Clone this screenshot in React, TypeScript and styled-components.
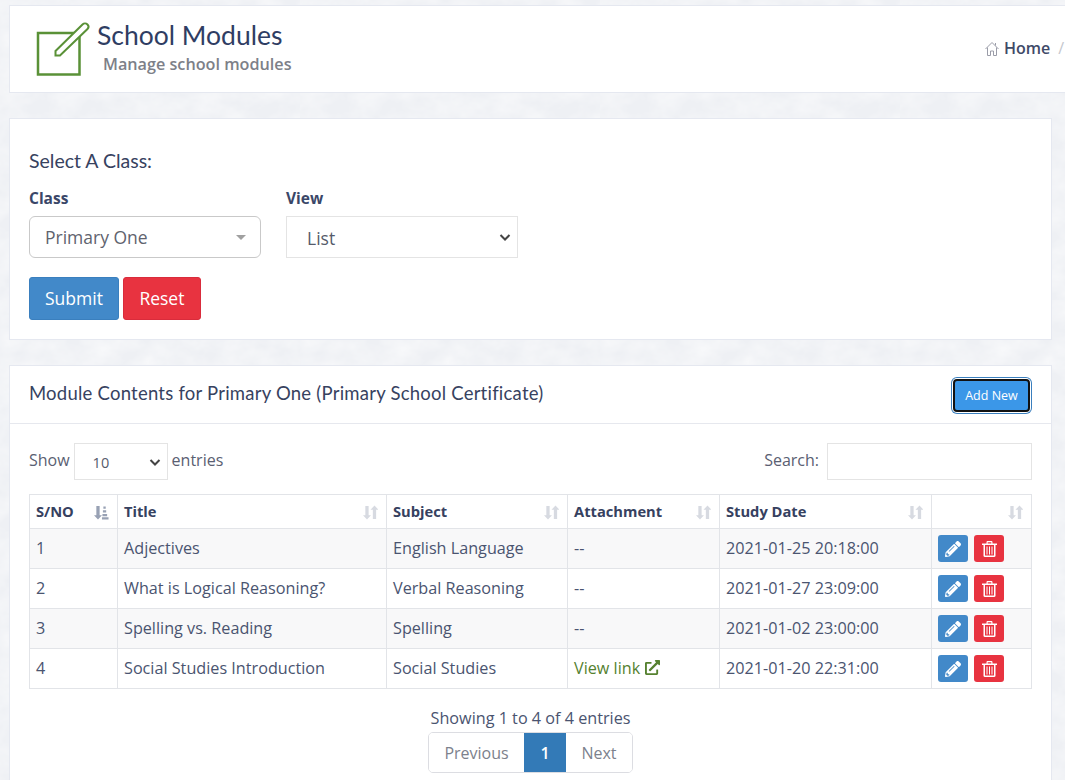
import React, { FC } from "react";
import styled, { createGlobalStyle } from "styled-components";
import { FaPencilAlt, FaExternalLinkAlt } from "react-icons/fa";

const paper =
  "data:image/svg+xml,%3Csvg xmlns='http://www.w3.org/2000/svg' width='300' height='300'%3E%3Cfilter id='n'%3E%3CfeTurbulence type='fractalNoise' baseFrequency='.035 .05' numOctaves='4' stitchTiles='stitch'/%3E%3CfeColorMatrix values='0 0 0 0 1 0 0 0 0 1 0 0 0 0 1 .9 0 0 0 -.25'/%3E%3C/filter%3E%3Crect width='300' height='300' filter='url(%23n)'/%3E%3C/svg%3E";

const GlobalStyle = createGlobalStyle`
  html, body {
    margin: 0;
    padding: 0;
    height: 780px;
    overflow: hidden;
    background: #eef0f4 url("${paper}");
    font-family: "Open Sans", "Noto Sans", sans-serif;
    font-size: 16px;
    color: #4a5470;
  }
  * { box-sizing: border-box; }
`;

const Page = styled.div`
  width: 1065px;
  height: 780px;
  overflow: hidden;
  padding: 5px 0 0 9px;
`;

const Card = styled.section`
  width: 1043px;
  background: #fff;
  border: 1px solid #e5e8f0;
`;

const HeaderCard = styled(Card)`
  width: 1120px;
  height: 88px;
  display: flex;
  align-items: flex-start;
  justify-content: space-between;
  padding: 12px 0 0 26px;
  margin-bottom: 25px;
`;

const TitleWrap = styled.div`
  display: flex;
  gap: 7px;
`;

const HeaderIcon = styled.svg`
  width: 54px;
  height: 54px;
  flex: none;
  margin-top: 4px;
`;

const Title = styled.h1`
  margin: 0;
  font-family: Lato, sans-serif;
  font-size: 26.5px;
  line-height: 34px;
  font-weight: 400;
  color: #2f3d63;
`;

const SubTitle = styled.div`
  margin: 1px 0 0 6px;
  font-size: 16.2px;
  line-height: 22px;
  font-weight: 600;
  color: #7d8088;
`;

const Breadcrumb = styled.nav`
  display: flex;
  align-items: center;
  gap: 5px;
  width: 143px;
  margin-top: 19px;
  font-size: 16px;
  line-height: 22px;
  font-weight: 600;
  color: #3f4a68;
`;

const Slash = styled.span`
  margin-left: 3px;
  font-weight: 400;
  color: #c5c8ce;
`;

const FormCard = styled(Card)`
  height: 222px;
  padding: 29px 19px 0;
  margin-bottom: 25px;
`;

const SectionTitle = styled.h2`
  margin: 0;
  font-family: Lato, sans-serif;
  font-size: 19.5px;
  line-height: 26px;
  font-weight: 400;
  color: #37425f;
`;

const FieldRow = styled.div`
  display: flex;
  gap: 25px;
  margin-top: 13px;
`;

const Field = styled.div`
  width: 232px;
`;

const Label = styled.label`
  display: block;
  font-size: 15.5px;
  line-height: 22px;
  font-weight: 700;
  color: #3a4768;
  margin-bottom: 7px;
`;

const FancySelect = styled.div`
  height: 42px;
  display: flex;
  align-items: center;
  justify-content: space-between;
  padding: 0 14px 0 15px;
  border: 1px solid #c9c9c9;
  border-radius: 6px;
  font-size: 17.5px;
  color: #5f636e;
`;

const Caret = styled.span`
  width: 0;
  height: 0;
  border-left: 5px solid transparent;
  border-right: 5px solid transparent;
  border-top: 5px solid #a0a0a0;
`;

const PlainSelect = styled.div<{ $small?: boolean }>`
  height: ${({ $small }) => ($small ? "37px" : "42px")};
  width: ${({ $small }) => ($small ? "94px" : "100%")};
  display: flex;
  align-items: center;
  justify-content: space-between;
  padding: ${({ $small }) => ($small ? "3px 5px 0 18px" : "2px 5px 0 20px")};
  border: 1px solid #e4e4e4;
  background: #fff;
  font-size: ${({ $small }) => ($small ? "14.5px" : "17.5px")};
  color: #555b6b;

  svg {
    margin-top: -2px;
  }
`;

const ButtonRow = styled.div`
  display: flex;
  gap: 4px;
  margin-top: 19px;
`;

const Button = styled.button<{ $danger?: boolean }>`
  height: 43px;
  padding: 0 ${({ $danger }) => ($danger ? "15.5px" : "15px")} 2px;
  border: 1px solid ${({ $danger }) => ($danger ? "#d92c3c" : "#3a7fbe")};
  border-radius: 3px;
  background: ${({ $danger }) => ($danger ? "#e83340" : "#4289c9")};
  color: #fff;
  font-family: inherit;
  font-size: 17.5px;
`;

const TableCard = styled(Card)`
  height: 430px;
`;

const TableHead = styled.div`
  height: 58px;
  display: flex;
  align-items: center;
  justify-content: space-between;
  padding: 0 19px;
  border-bottom: 1px solid #e6e8ee;
`;

const TableTitle = styled(SectionTitle)`
  font-size: 18.5px;
  letter-spacing: 0.23px;
  margin-bottom: 3px;
`;

const AddButton = styled.button`
  width: 77px;
  height: 33px;
  margin: 2px 2px 0 0;
  padding: 0;
  border: 2px solid #111;
  border-radius: 4px;
  background: #3b97e8;
  box-shadow: 0 0 0 1px #fff, 0 0 0 2px #3a7fbe;
  color: #fff;
  font-family: inherit;
  font-size: 12.5px;
`;

const TableBody = styled.div`
  padding: 19px 19px 0;
`;

const Controls = styled.div`
  display: flex;
  align-items: center;
  justify-content: space-between;
  height: 37px;
  font-size: 16px;
  line-height: 22px;
  color: #5a6072;
`;

const ControlText = styled.span`
  margin-top: -4px;
`;

const LengthGroup = styled.div`
  display: flex;
  align-items: center;
  gap: 4px;
`;

const SearchBox = styled.div`
  width: 205px;
  height: 37px;
  border: 1px solid #e4e4e4;
`;

const SearchGroup = styled.div`
  display: flex;
  align-items: center;
  gap: 8px;
`;

const Table = styled.table`
  width: 1002px;
  margin-top: 14px;
  border-collapse: collapse;
  table-layout: fixed;
`;

const Th = styled.th<{ $width: number }>`
  width: ${({ $width }) => $width}px;
  height: 34px;
  padding: 0 6px;
  border: 1px solid #e2e4e8;
  text-align: left;
  font-size: 14.7px;
  font-weight: 700;
  color: #36415f;
`;

const ThInner = styled.div`
  display: flex;
  align-items: center;
  justify-content: space-between;
  min-height: 20px;

  svg {
    margin: 1px 2px 0 auto;
  }
`;

const ThLabel = styled.span`
  margin-bottom: 2px;
`;

const Row = styled.tr<{ $odd: boolean }>`
  background: ${({ $odd }) => ($odd ? "#f8f8f9" : "#fff")};
`;

const Td = styled.td`
  height: 40px;
  padding: 0 6px 2px;
  border: 1px solid #e2e4e8;
  font-size: 16.2px;
  color: #4a5470;
  white-space: nowrap;
`;

const ActionCell = styled(Td)`
  padding: 0 6px;
`;

const ViewLink = styled.a`
  display: inline-flex;
  align-items: center;
  gap: 5px;
  color: #55812f;
`;

const Actions = styled.div`
  display: flex;
  gap: 6px;
`;

const IconButton = styled.button<{ $danger?: boolean }>`
  width: 30px;
  height: 27px;
  padding: 0;
  display: flex;
  align-items: center;
  justify-content: center;
  border: 0;
  border-radius: 3px;
  background: ${({ $danger }) => ($danger ? "#e83340" : "#4289c9")};
  color: #fff;
  font-size: 16px;
`;

const Footer = styled.div`
  display: flex;
  flex-direction: column;
  align-items: center;
  margin-top: 18px;
  font-size: 16.2px;
  line-height: 22px;
  color: #4a5470;
`;

const Pager = styled.div`
  display: flex;
  height: 41px;
  margin-top: 3px;
  border: 1px solid #dcdde2;
  border-radius: 5px;
  overflow: hidden;
`;

const PageItem = styled.span<{ $active?: boolean; $width: number }>`
  width: ${({ $width }) => $width}px;
  display: flex;
  align-items: center;
  justify-content: center;
  background: ${({ $active }) => ($active ? "#337ab7" : "#fff")};
  color: ${({ $active }) => ($active ? "#fff" : "#7c818c")};
  font-weight: ${({ $active }) => ($active ? 600 : 400)};
  font-size: 16px;
`;

const Chevron: FC = () => (
  <svg width="14" height="14" viewBox="0 0 14 14" fill="none">
    <path d="M2.5 5l4.5 4.5L11.5 5" stroke="#444" strokeWidth="2" />
  </svg>
);

const SortIcon: FC<{ active?: boolean }> = ({ active }) => (
  <svg width="15" height="15" viewBox="0 0 16 16" fill={active ? "#98a1b4" : "#d7dae1"}>
    <path d="M2.500 1h3.500v10h2.500L4.250 15.500 0 11h2.500z" />
    {active ? (
      <path d="M10 1.500h2.500v2.500H10zM9.500 5.500H13V8H9.500zM9 9.500h5V12H9zM8.500 13h7v2.500h-7z" />
    ) : (
      <path d="M10.500 15V5H8L12.250 0.500 16.500 5H14v10z" />
    )}
  </svg>
);

const TrashIcon: FC = () => (
  <svg width="15" height="16" viewBox="0 0 15 16" fill="#fff">
    <path d="M4.500 3V1.200C4.500.5 5 0 5.700 0h3.600c.7 0 1.200.5 1.200 1.200V3H9.300V1.200H5.700V3z" />
    <path d="M0 2.500h15V4H0z" />
    <path d="M1.500 4H3v10.500h9V4h1.500v10.800c0 .7-.5 1.200-1.200 1.200H2.700c-.7 0-1.200-.5-1.200-1.200z" />
    <path d="M4.500 5.500h1v8h-1zM7 5.500h1v8H7zM9.500 5.500h1v8h-1z" />
  </svg>
);

const columns = [
  { label: "S/NO", width: 88, active: true },
  { label: "Title", width: 269 },
  { label: "Subject", width: 181 },
  { label: "Attachment", width: 152 },
  { label: "Study Date", width: 212 },
  { label: "", width: 100 },
];

const rows = [
  ["1", "Adjectives", "English Language", "--", "2021-01-25 20:18:00"],
  ["2", "What is Logical Reasoning?", "Verbal Reasoning", "--", "2021-01-27 23:09:00"],
  ["3", "Spelling vs. Reading", "Spelling", "--", "2021-01-02 23:00:00"],
  ["4", "Social Studies Introduction", "Social Studies", "link", "2021-01-20 22:31:00"],
];

export default function App() {
  return (
    <Page>
      <GlobalStyle />
      <HeaderCard>
        <TitleWrap>
          <HeaderIcon viewBox="0 0 54 54" fill="none">
            <rect x="2" y="11" width="41.500" height="41.500" stroke="#5a9137" strokeWidth="2.500" />
            <path
              d="M19.500 29L46.500 2.500c1.500-1.500 3.500-1.500 5 0s1.500 3 0 4.500L24 33.500h-4.500z"
              stroke="#5a9137"
              strokeWidth="2"
              fill="#fff"
            />
          </HeaderIcon>
          <div>
            <Title>School Modules</Title>
            <SubTitle>Manage school modules</SubTitle>
          </div>
        </TitleWrap>
        <Breadcrumb>
          <svg width="14" height="15" viewBox="0 0 14 15" fill="none" stroke="#9a9ca8">
            <path d="M0.500 8L7 1.500 13.500 8M10.500 4.500V2M2.500 6.500v8h3V10h3v4.500h3v-8" />
          </svg>
          Home
          <Slash>/</Slash>
        </Breadcrumb>
      </HeaderCard>

      <FormCard>
        <SectionTitle>Select A Class:</SectionTitle>
        <FieldRow>
          <Field>
            <Label>Class</Label>
            <FancySelect>
              Primary One
              <Caret />
            </FancySelect>
          </Field>
          <Field>
            <Label>View</Label>
            <PlainSelect>
              List
              <Chevron />
            </PlainSelect>
          </Field>
        </FieldRow>
        <ButtonRow>
          <Button>Submit</Button>
          <Button $danger>Reset</Button>
        </ButtonRow>
      </FormCard>

      <TableCard>
        <TableHead>
          <TableTitle>Module Contents for Primary One (Primary School Certificate)</TableTitle>
          <AddButton>Add New</AddButton>
        </TableHead>
        <TableBody>
          <Controls>
            <LengthGroup>
              <ControlText>Show</ControlText>
              <PlainSelect $small>
                10
                <Chevron />
              </PlainSelect>
              <ControlText>entries</ControlText>
            </LengthGroup>
            <SearchGroup>
              <ControlText>Search:</ControlText>
              <SearchBox />
            </SearchGroup>
          </Controls>
          <Table>
            <thead>
              <tr>
                {columns.map((col) => (
                  <Th key={col.label} $width={col.width}>
                    <ThInner>
                      <ThLabel>{col.label}</ThLabel>
                      <SortIcon active={col.active} />
                    </ThInner>
                  </Th>
                ))}
              </tr>
            </thead>
            <tbody>
              {rows.map((row, index) => (
                <Row key={row[0]} $odd={index % 2 === 0}>
                  <Td>{row[0]}</Td>
                  <Td>{row[1]}</Td>
                  <Td>{row[2]}</Td>
                  <Td>
                    {row[3] === "link" ? (
                      <ViewLink>
                        View link <FaExternalLinkAlt size={15} />
                      </ViewLink>
                    ) : (
                      row[3]
                    )}
                  </Td>
                  <Td>{row[4]}</Td>
                  <ActionCell>
                    <Actions>
                      <IconButton>
                        <FaPencilAlt />
                      </IconButton>
                      <IconButton $danger>
                        <TrashIcon />
                      </IconButton>
                    </Actions>
                  </ActionCell>
                </Row>
              ))}
            </tbody>
          </Table>
          <Footer>
            Showing 1 to 4 of 4 entries
            <Pager>
              <PageItem $width={95}>Previous</PageItem>
              <PageItem $active $width={42}>1</PageItem>
              <PageItem $width={66}>Next</PageItem>
            </Pager>
          </Footer>
        </TableBody>
      </TableCard>
    </Page>
  );
}
